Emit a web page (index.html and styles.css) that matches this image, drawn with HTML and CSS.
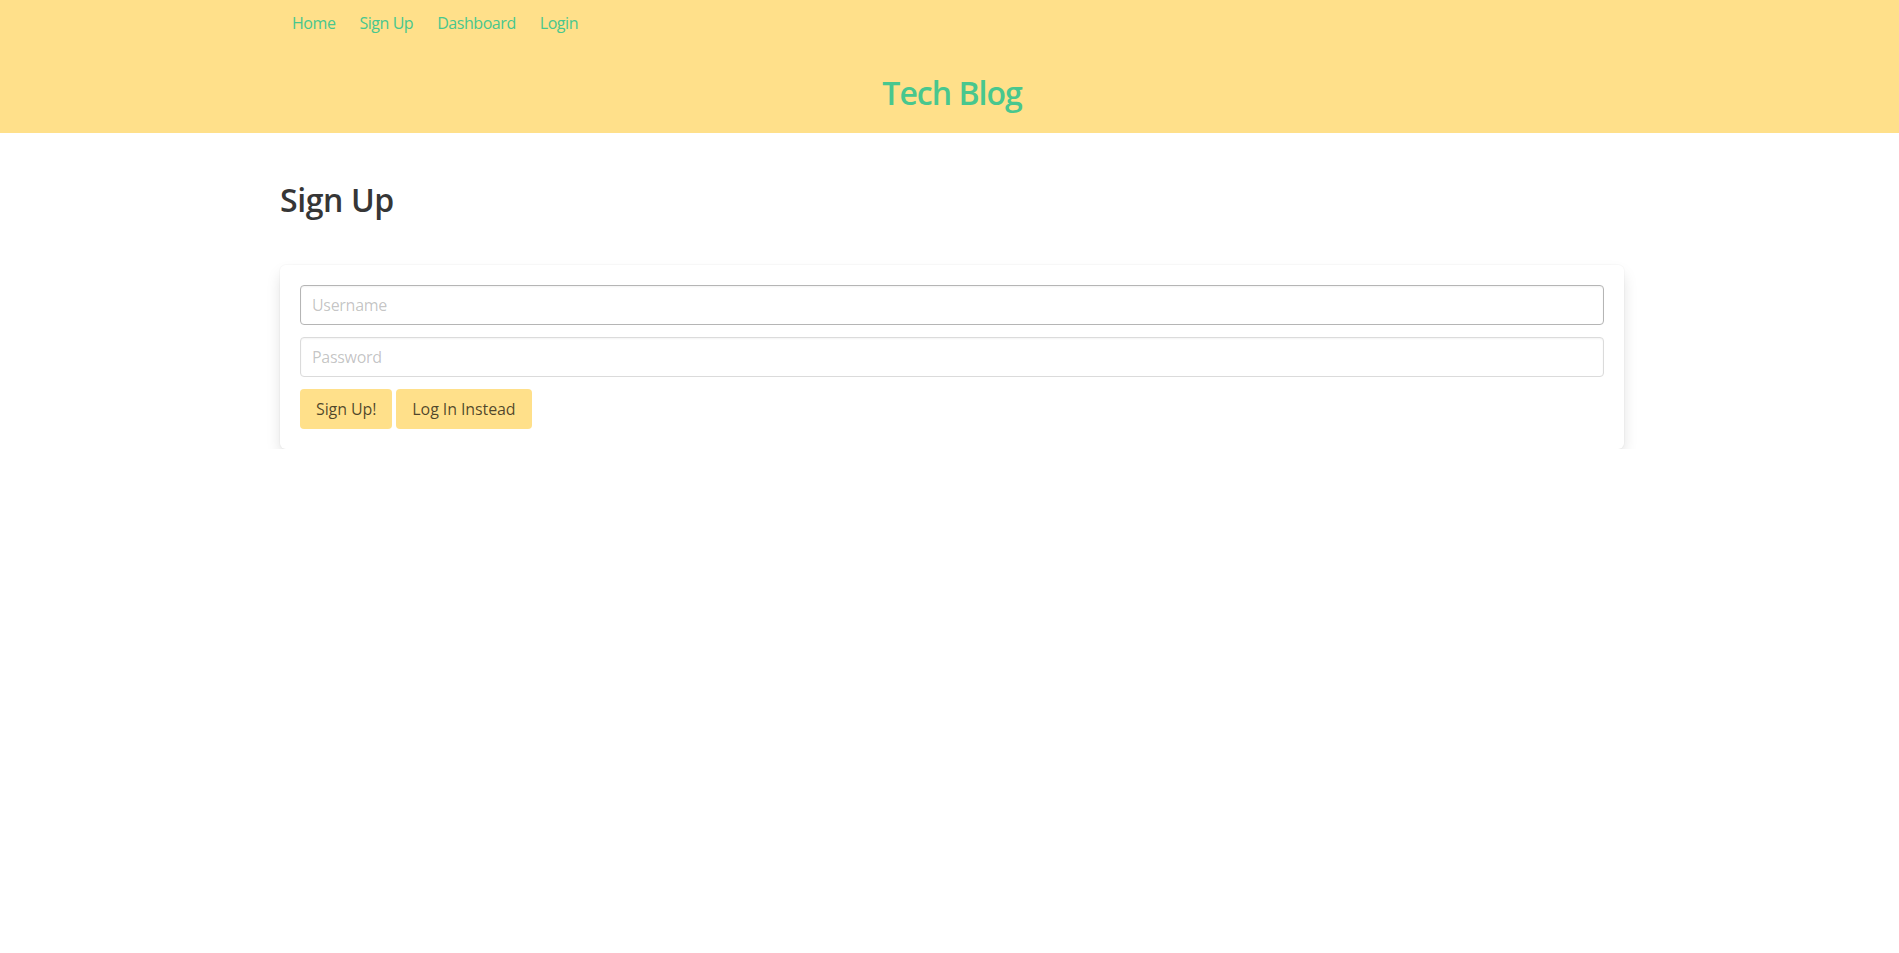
FILE: index.html
```html
<!DOCTYPE html>
<html lang="en">
<head>
<meta charset="utf-8">
<title>Tech Blog</title>
<link rel="stylesheet" href="styles.css">
</head>
<body>
<header class="hero">
  <div class="shift">
    <nav class="container nav">
      <a class="nav-link" href="#">Home</a>
      <a class="nav-link" href="#">Sign Up</a>
      <a class="nav-link" href="#">Dashboard</a>
      <a class="nav-link" href="#">Login</a>
    </nav>
    <div class="hero-body">
      <h1 class="site-title">Tech Blog</h1>
    </div>
  </div>
</header>
<main class="shift">
  <section class="container section">
    <h2 class="page-title">Sign Up</h2>
    <form class="box">
      <div class="field">
        <input class="input input-hover" type="text" placeholder="Username">
      </div>
      <div class="field">
        <input class="input" type="password" placeholder="Password">
      </div>
      <div class="buttons">
        <button class="button" type="submit">Sign Up!</button>
        <button class="button" type="button">Log In Instead</button>
      </div>
    </form>
  </section>
</main>
</body>
</html>
```

FILE: styles.css
```css
* { box-sizing: border-box; }

html, body {
  margin: 0;
  padding: 0;
  background: #ffffff;
}

body {
  font-family: "Open Sans", "Noto Sans", "Liberation Sans", sans-serif;
  font-size: 16px;
  line-height: 1.5;
  color: #4a4a4a;
}

.shift {
  padding-left: 5px;
}

.container {
  width: 1344px;
  margin: 0 auto;
}

.hero {
  background: #ffe08a;
  height: 133px;
}

.nav {
  display: flex;
  padding: 3px 0;
}

.nav-link {
  display: block;
  padding: 8px 12px;
  color: #48c78e;
  text-decoration: none;
  font-size: 16px;
  line-height: 24px;
  letter-spacing: -0.45px;
}

.hero-body {
  padding: 29px 0 22px;
  text-align: center;
}

.site-title {
  margin: 0;
  font-size: 32px;
  line-height: 36px;
  font-weight: 600;
  letter-spacing: -1px;
  color: #48c78e;
}

.section {
  padding-top: 49px;
}

.page-title {
  margin: 0 0 47px;
  font-size: 32px;
  line-height: 36px;
  font-weight: 600;
  letter-spacing: -0.4px;
  color: #363636;
}

.box {
  background: #ffffff;
  border-radius: 6px;
  padding: 20px;
  box-shadow: 0 8px 16px -2px rgba(10, 10, 10, 0.15), 0 0 0 1px rgba(10, 10, 10, 0.02);
}

.field {
  margin-bottom: 12px;
}

.input {
  display: block;
  width: 100%;
  height: 40px;
  padding: 7px 11px;
  font-family: inherit;
  font-size: 16px;
  line-height: 24px;
  letter-spacing: -0.3px;
  color: #363636;
  background: #ffffff;
  border: 1px solid #dbdbdb;
  border-radius: 4px;
  box-shadow: inset 0 1px 2px rgba(10, 10, 10, 0.05);
  outline: none;
}

.input-hover {
  border-color: #b5b5b5;
}

.input::placeholder {
  color: rgba(54, 54, 54, 0.3);
}

.buttons {
  display: flex;
  gap: 4px;
}

.button {
  height: 40px;
  padding: 7px 15px;
  font-family: inherit;
  font-size: 16px;
  line-height: 24px;
  letter-spacing: -0.1px;
  color: rgba(0, 0, 0, 0.7);
  background: #ffe08a;
  border: 1px solid transparent;
  border-radius: 4px;
  cursor: pointer;
}
```
